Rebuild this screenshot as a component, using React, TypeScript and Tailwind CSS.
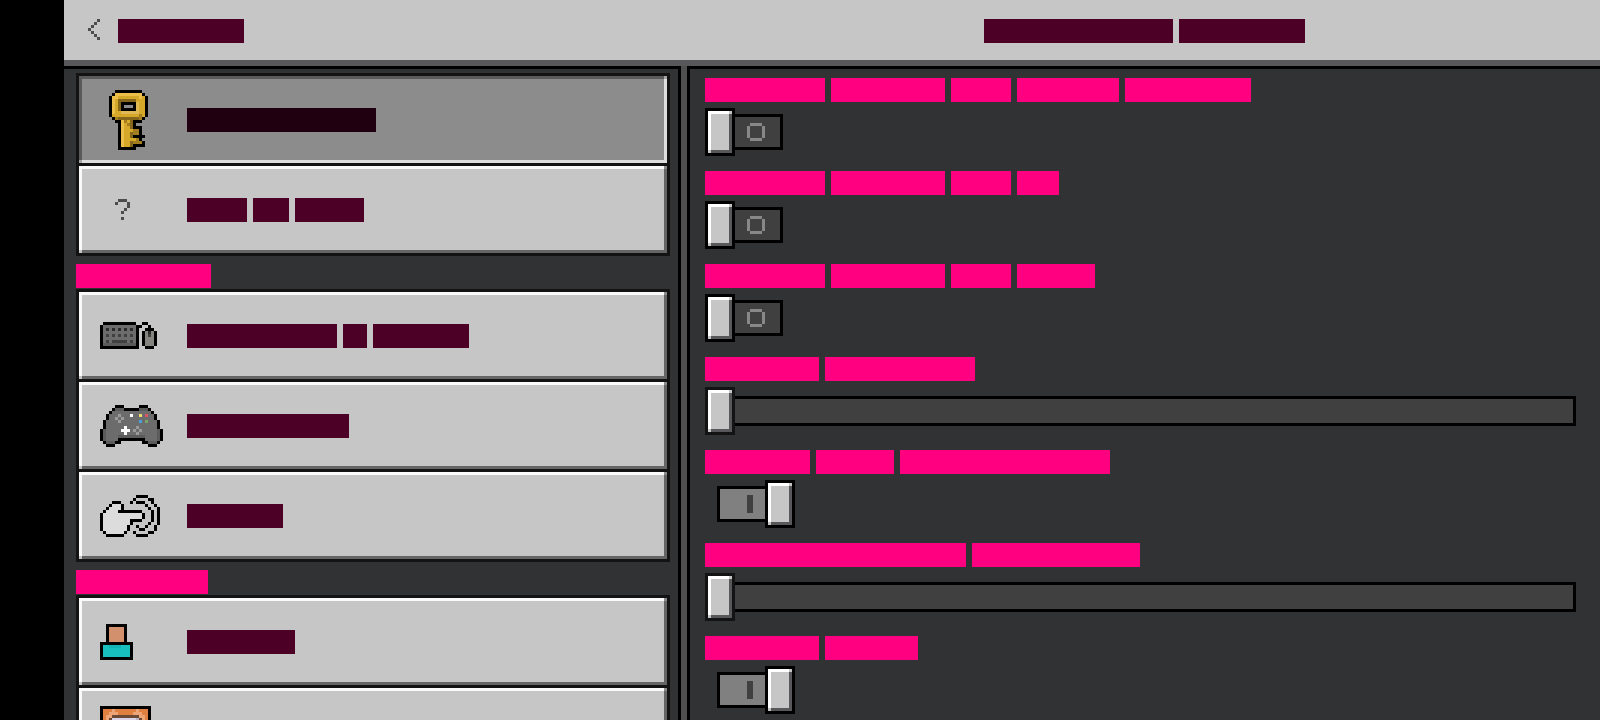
import clsx from "clsx";
import { useId, useState } from "react";

const PALETTE: Record<string, string> = {
  K: "#000000",
  // key
  L: "#ecbf4b",
  G: "#d6a829",
  H: "#dfb955",
  D: "#86661a",
  d: "#a37d1f",
  // devices
  B: "#6c6c6c",
  b: "#5b5b5b",
  x: "#2b2b2b",
  y: "#404040",
  m: "#85847f",
  l: "#9a9a9a",
  W: "#ffffff",
  w: "#dcdcdc",
  Y: "#e8dc6a",
  R: "#dd5566",
  U: "#4aa0dc",
  g: "#7aa566",
  // person and fox
  S: "#d3906c",
  T: "#17bfbe",
  t: "#12b3b2",
  O: "#e08040",
  o: "#eda578",
  n: "#6b4a35",
  v: "#dcd5ea",
  u: "#b9b2c8",
  // glyphs
  q: "#4c4c4c",
};

const KEY = [
  ".....KKKKKKKKK..",
  "....KLLLLLLLLLK.",
  "...KLLGGGGGGGLGK",
  "...KLGDDDDDDGGGK",
  "...KLGDKKKKKHGGK",
  "...KLGDK...KHGGK",
  "...KLGDKKKKKHGGK",
  "...KLGGHHHHHHGGK",
  "...KGGGGGGGGGdGK",
  "....KdDDDDDDDdK.",
  ".....KKLdGDKKK..",
  "......KLGdDK....",
  "......KLGGDKKK..",
  "......KLGGGddK..",
  "......KLGGDddK..",
  "......KLGGDKKKK.",
  "......KLGGGGdK..",
  "......KLGGDdddK.",
  "......KLGGDKKKK.",
  "......KKKKKK....",
];

const QUESTION = [
  "......qqq.",
  ".....q...q",
  ".........q",
  "........q.",
  ".......q..",
  "..........",
  ".......q..",
];

const KEYBOARD = [
  ".KKKKKKKKKKK..KK...",
  "KBBBBBBBBBBBKK..K..",
  "KBxBxBxBxBxBK..KKK.",
  "KBBBBBBBBBBBK.KmxmK",
  "KByByByByByBK.KmymK",
  "KBBBBBBBBBBBK.KmmmK",
  "KByByyyyyByBK.KmmmK",
  "KbbbbbbbbbbbK.KmmmK",
  "KKKKKKKKKKKKK..KKK.",
];

const CONTROLLER = [
  ".....KKK.....KKK.....",
  "....KbbbKKKKKbbbK....",
  "...KBBBBBBBBBBBBBK...",
  "..KBBBlBBBWBBYBRBBK..",
  "..KBBlBlBBBBBBBBBBK..",
  ".KBBBBlBBBBBBUBgBBBK.",
  ".KBBBBBBBBBBBBBBBBBK.",
  ".KBBBBBBWBBBlBBBBBBK.",
  "KbBBBBBWWWBlBlBBBBBbK",
  "KbBBBBBBWBBBlBBBBBBbK",
  "KbBBBBbbbbbbbbbBBBBbK",
  "KbBBBBKKKKKKKKKBBBBbK",
  ".KbbbKK.......KKbbbK.",
  "..KKK...........KKK..",
];

const TOUCH = [
  "............KKKK....",
  "...........K....KK..",
  "....KKK...K.KKK..K..",
  "...KwwwK.......K..K.",
  "..KwwwwK........K..K",
  ".KwwwwKKKKKKKK...K.K",
  "KwwwwwwwwwwwwwK..K.K",
  "KwwwwwwwwwwwwwK..K.K",
  "KwwwwwwwwwKKKK...K.K",
  "KwwwwwwwwwK.....K..K",
  "KwwwwwwwwK..K..K..K.",
  "KwwwwwwwwK...KK...K.",
  ".KwwwwwwK..K....KK..",
  "..KKKKKK....KKKK....",
];

const PERSON = [
  "..KKKKKKK..",
  "..KSSSSSK..",
  "..KSSSSSK..",
  "..KSSSSSK..",
  "..KSSSSSK..",
  "..KSSSSSK..",
  "KKKKKKKKKKK",
  "KTTttttTTTK",
  "KTTTTTTTTTK",
  "KTTTTTTTTTK",
  "KTTTTTTTTTK",
  "KKKKKKKKKKK",
];

const FOX = [
  "KKKKKKKKKKKKKKKKK",
  "KOOOoOOOOOOOoOOOK",
  "KOOoooOOOOOoooOOK",
  "KOoonnnnnnnnnooOK",
  "KOonvvvvvvvvunoOK",
  "KOonvvvvvvvvunoOK",
  "KOonvvvvvvvvunoOK",
  "KOonvvvvvvvvunoOK",
  "KOonvvvvvvvvunoOK",
  "KOonvvvvvvvvunoOK",
  "KOonvvvvvvvvunoOK",
  "KOonvvvvvvvvunoOK",
  "KOonuuuuuuuuunoOK",
  "KOoonnnnnnnnnooOK",
  "KOOoooOOOOOoooOOK",
  "KOOOOOOOOOOOOOOOK",
  "KKKKKKKKKKKKKKKKK",
];

const CHEVRON = ["...q", "..q.", ".q..", "q...", ".q..", "..q.", "...q"];
const OFF_MARK = [".llll.", "l....l", "l....l", "l....l", "l....l", ".llll."];

type PixelArtProps = { rows: string[]; className?: string };

const PixelArt = ({ rows, className }: PixelArtProps) => (
  <svg
    width={rows[0].length * 3}
    height={rows.length * 3}
    viewBox={`0 0 ${rows[0].length} ${rows.length}`}
    shapeRendering="crispEdges"
    className={clsx("block shrink-0", className)}
    aria-hidden={true}
  >
    {rows.flatMap((row, y) =>
      [...row].map((c, x) =>
        c === "." ? null : (
          <rect
            key={`${x}-${y}`}
            x={x}
            y={y}
            width={1}
            height={1}
            fill={PALETTE[c]}
          />
        ),
      ),
    )}
  </svg>
);

type WordsProps = { widths: number[]; className?: string };

// one solid block per word
const Words = ({ widths, className }: WordsProps) => (
  <span className="flex gap-1.5">
    {widths.map((width, i) => (
      <span key={i} className={clsx("h-6", className)} style={{ width }} />
    ))}
  </span>
);

const Knob = ({ className }: { className?: string }) => (
  <span
    className={clsx(
      "relative h-12 w-[30px] shrink-0 border-3 bg-[#c6c6c6] shadow-[inset_3px_3px_0_#ffffff,inset_-3px_-3px_0_#58585a] before:absolute before:top-0 before:right-0 before:size-[3px] before:bg-[#c6c6c6] after:absolute after:bottom-0 after:left-0 after:size-[3px] after:bg-[#c6c6c6]",
      className,
    )}
  />
);

type MenuItemProps = { icon: string[]; words: number[]; active?: boolean };

const MenuItem = ({ icon, words, active }: MenuItemProps) => (
  <button
    type="button"
    className={clsx(
      "relative flex h-[87px] w-full items-center pl-[21px] before:absolute before:top-0 before:right-0 before:size-[3px] after:absolute after:bottom-0 after:left-0 after:size-[3px]",
      active
        ? "bg-[#8c8c8c] shadow-[inset_3px_3px_0_#5a5a5b,inset_-3px_-3px_0_#dedede] before:bg-[#a5a5a5] after:bg-[#a5a5a5]"
        : "bg-[#c6c6c6] shadow-[inset_3px_3px_0_#fafafa,inset_-3px_-3px_0_#656565] before:bg-[#8c8c8c] after:bg-[#c6c6c6]",
    )}
  >
    <span className="w-[87px]">
      <PixelArt rows={icon} />
    </span>
    <Words
      widths={words}
      className={active ? "bg-[#200010]" : "bg-[#4d0025]"}
    />
  </button>
);

type MenuGroupProps = { heading?: number; items: MenuItemProps[] };

const MenuGroup = ({ heading, items }: MenuGroupProps) => (
  <section>
    {heading && (
      <h2 className="mb-px">
        <Words widths={[heading]} className="bg-[#ff0080]" />
      </h2>
    )}
    <ul className="flex flex-col gap-[3px] border-3 border-[#131313] bg-[#131313]">
      {items.map((item, i) => (
        <li key={i}>
          <MenuItem {...item} />
        </li>
      ))}
    </ul>
  </section>
);

type SettingProps = {
  kind: "toggle" | "slider";
  words: number[];
  on?: boolean;
};

const Toggle = ({ id, on = false }: { id: string; on?: boolean }) => {
  const [checked, setChecked] = useState(on);

  return (
    <span className="relative flex h-12 w-[90px]">
      <span
        className={clsx(
          "flex items-center",
          checked ? "ml-3 flex-row-reverse" : "flex-row",
        )}
      >
        <Knob className="border-black" />
        <span
          className={clsx(
            "flex h-9 w-12 items-center border-y-3 border-black px-3",
            checked
              ? "justify-end border-l-3 bg-[#808080]"
              : "border-r-3 bg-[#404040]",
          )}
        >
          {checked ? (
            <span className="h-[18px] w-1.5 bg-[#404040]" />
          ) : (
            <PixelArt rows={OFF_MARK} className="opacity-80" />
          )}
        </span>
      </span>
      <input
        id={id}
        type="checkbox"
        checked={checked}
        onChange={(e) => setChecked(e.target.checked)}
        className="absolute inset-0 cursor-pointer opacity-0"
      />
    </span>
  );
};

const Slider = ({ id }: { id: string }) => {
  const [value, setValue] = useState(0);

  return (
    <span className="relative grid h-12 items-center">
      <span className="col-start-1 row-start-1 h-[30px] border-3 border-black bg-[#404040]" />
      <span
        className="col-start-1 row-start-1 flex"
        style={{ marginLeft: `calc((100% - 30px) * ${value / 100})` }}
      >
        <Knob className="border-[#131313]" />
      </span>
      <input
        id={id}
        type="range"
        value={value}
        onChange={(e) => setValue(Number(e.target.value))}
        className="absolute inset-0 cursor-pointer opacity-0"
      />
    </span>
  );
};

const Setting = ({ kind, words, on }: SettingProps) => {
  const id = useId();

  return (
    <div className="flex flex-col gap-1.5">
      <label htmlFor={id}>
        <Words widths={words} className="bg-[#ff0080]" />
      </label>
      {kind === "toggle" ? <Toggle id={id} on={on} /> : <Slider id={id} />}
    </div>
  );
};

const MENU: MenuGroupProps[] = [
  {
    items: [
      { icon: KEY, words: [189], active: true },
      { icon: QUESTION, words: [60, 36, 69] },
    ],
  },
  {
    heading: 135,
    items: [
      { icon: KEYBOARD, words: [150, 24, 96] },
      { icon: CONTROLLER, words: [162] },
      { icon: TOUCH, words: [96] },
    ],
  },
  {
    heading: 132,
    items: [
      { icon: PERSON, words: [108] },
      { icon: FOX, words: [] },
    ],
  },
];

const SETTINGS: SettingProps[] = [
  { kind: "toggle", words: [120, 114, 60, 102, 126] },
  { kind: "toggle", words: [120, 114, 60, 42] },
  { kind: "toggle", words: [120, 114, 60, 78] },
  { kind: "slider", words: [114, 150] },
  { kind: "toggle", words: [105, 78, 210], on: true },
  { kind: "slider", words: [261, 168] },
  { kind: "toggle", words: [114, 93], on: true },
];

const App = () => (
  <div className="flex h-screen flex-col overflow-hidden bg-black pl-16">
    <header className="grid h-[66px] shrink-0 grid-cols-[617fr_919fr] border-b-6 border-[#58585a] bg-[#c6c6c6] pt-[19px]">
      <button type="button" className="flex items-start gap-[18px] pl-6">
        <PixelArt rows={CHEVRON} />
        <Words widths={[126]} className="bg-[#4d0025]" />
      </button>
      <h1 className="flex justify-center pl-2">
        <Words widths={[189, 126]} className="bg-[#4d0025]" />
      </h1>
    </header>

    <div className="grid min-h-0 flex-1 grid-cols-[617fr_919fr]">
      <nav className="flex flex-col gap-2 overflow-hidden border-t-3 border-r-3 border-black bg-[#313234] pt-1 pr-2 pl-3">
        {MENU.map((group, i) => (
          <MenuGroup key={i} {...group} />
        ))}
      </nav>
      <div className="flex min-h-0 border-l-6 border-[#4f4f50]">
        <main className="flex flex-1 flex-col gap-[15px] overflow-hidden border-t-3 border-l-3 border-black bg-[#313234] pt-[9px] pr-6 pl-[15px]">
          {SETTINGS.map((setting, i) => (
            <Setting key={i} {...setting} />
          ))}
        </main>
      </div>
    </div>
  </div>
);

export default App;
